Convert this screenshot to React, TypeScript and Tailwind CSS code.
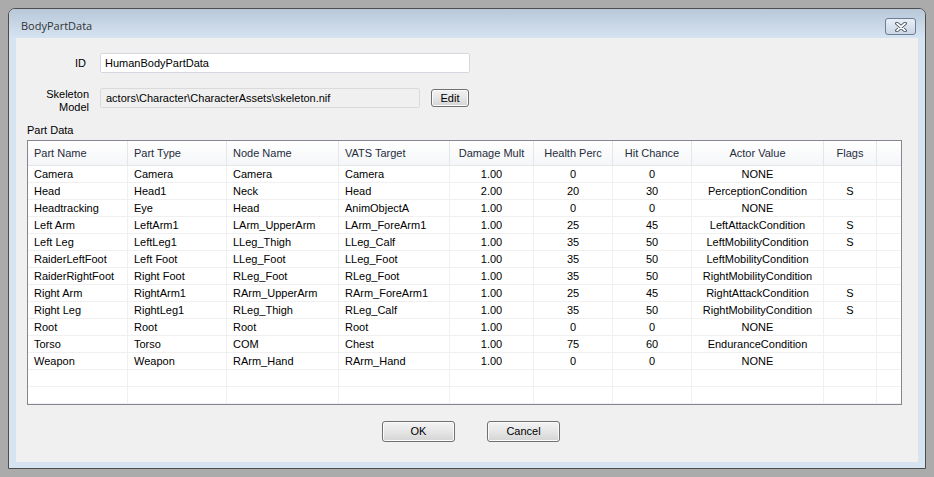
import React from "react";

type Row = {
  name: string;
  type: string;
  node: string;
  vats: string;
  dmg: string;
  health: string;
  hit: string;
  actor: string;
  flags: string;
};

const rows: Row[] = [
  { name: "Camera", type: "Camera", node: "Camera", vats: "Camera", dmg: "1.00", health: "0", hit: "0", actor: "NONE", flags: "" },
  { name: "Head", type: "Head1", node: "Neck", vats: "Head", dmg: "2.00", health: "20", hit: "30", actor: "PerceptionCondition", flags: "S" },
  { name: "Headtracking", type: "Eye", node: "Head", vats: "AnimObjectA", dmg: "1.00", health: "0", hit: "0", actor: "NONE", flags: "" },
  { name: "Left Arm", type: "LeftArm1", node: "LArm_UpperArm", vats: "LArm_ForeArm1", dmg: "1.00", health: "25", hit: "45", actor: "LeftAttackCondition", flags: "S" },
  { name: "Left Leg", type: "LeftLeg1", node: "LLeg_Thigh", vats: "LLeg_Calf", dmg: "1.00", health: "35", hit: "50", actor: "LeftMobilityCondition", flags: "S" },
  { name: "RaiderLeftFoot", type: "Left Foot", node: "LLeg_Foot", vats: "LLeg_Foot", dmg: "1.00", health: "35", hit: "50", actor: "LeftMobilityCondition", flags: "" },
  { name: "RaiderRightFoot", type: "Right Foot", node: "RLeg_Foot", vats: "RLeg_Foot", dmg: "1.00", health: "35", hit: "50", actor: "RightMobilityCondition", flags: "" },
  { name: "Right Arm", type: "RightArm1", node: "RArm_UpperArm", vats: "RArm_ForeArm1", dmg: "1.00", health: "25", hit: "45", actor: "RightAttackCondition", flags: "S" },
  { name: "Right Leg", type: "RightLeg1", node: "RLeg_Thigh", vats: "RLeg_Calf", dmg: "1.00", health: "35", hit: "50", actor: "RightMobilityCondition", flags: "S" },
  { name: "Root", type: "Root", node: "Root", vats: "Root", dmg: "1.00", health: "0", hit: "0", actor: "NONE", flags: "" },
  { name: "Torso", type: "Torso", node: "COM", vats: "Chest", dmg: "1.00", health: "75", hit: "60", actor: "EnduranceCondition", flags: "" },
  { name: "Weapon", type: "Weapon", node: "RArm_Hand", vats: "RArm_Hand", dmg: "1.00", health: "0", hit: "0", actor: "NONE", flags: "" },
];

// column widths and alignment, in the listview's order
const cols = [
  { key: "name", label: "Part Name", w: "w-[100px]", center: false },
  { key: "type", label: "Part Type", w: "w-[99px]", center: false },
  { key: "node", label: "Node Name", w: "w-[112px]", center: false },
  { key: "vats", label: "VATS Target", w: "w-[111px]", center: false },
  { key: "dmg", label: "Damage Mult", w: "w-[84px]", center: true },
  { key: "health", label: "Health Perc", w: "w-[79px]", center: true },
  { key: "hit", label: "Hit Chance", w: "w-[79px]", center: true },
  { key: "actor", label: "Actor Value", w: "w-[132px]", center: true },
  { key: "flags", label: "Flags", w: "w-[53px]", center: true },
] as const;

function WinButton({ label, className }: { label: string; className: string }) {
  return (
    <button
      className={`${className} rounded-[3px] border border-[#707070] bg-gradient-to-b from-[#f3f3f3] via-[#e6e6e6] to-[#d4d4d4] text-[11px] leading-none text-black shadow-[inset_0_0_0_1px_#fbfbfb]`}
    >
      {label}
    </button>
  );
}

function DataRow({ row }: { row?: Row }) {
  return (
    <div className="flex h-[17px] border-b border-[#f0f0f0]">
      {cols.map((c) => (
        <div
          key={c.key}
          className={`${c.w} shrink-0 border-r border-[#f0f0f0] leading-[17px] ${c.center ? "text-center" : "pl-[6px]"} whitespace-nowrap overflow-hidden`}
        >
          {row ? row[c.key] : ""}
        </div>
      ))}
      <div className="flex-1" />
    </div>
  );
}

export default function App() {
  return (
    <div className="w-[934px] h-[477px] bg-[#ababab] pt-2 pl-2 font-['Liberation_Sans',Arial,sans-serif] text-[11px] text-black">
      <div className="w-[918px] h-[461px] rounded-t-[7px] border border-[#4d4d4d] bg-[#d6e3f1] flex flex-col overflow-hidden">
        {/* title bar */}
        <div className="h-[29px] shrink-0 flex items-start justify-between bg-gradient-to-b from-[#b8c8d9] to-[#d6e3f1]">
          <span className="pl-[12px] pt-[9px] font-['Open_Sans',sans-serif] text-[11px] leading-[16px] text-[#333]">
            BodyPartData
          </span>
          <div className="mt-[9px] mr-[9px] w-[31px] h-[17px] rounded-[3px] border border-[#6f7d92] bg-gradient-to-b from-[#e9eff7] to-[#c9d6e6] flex items-center justify-center">
            <svg width="14" height="10" viewBox="0 0 14 10">
              <path d="M3 1.5 L11 8.5 M11 1.5 L3 8.5" stroke="#3d4656" strokeWidth="3.6" strokeLinecap="round" />
              <path d="M3 1.5 L11 8.5 M11 1.5 L3 8.5" stroke="#ffffff" strokeWidth="1.8" strokeLinecap="round" />
            </svg>
          </div>
        </div>

        {/* client area */}
        <div className="mx-[7px] w-[902px] h-[424px] bg-[#f0f0f0] flex flex-col">
          <div className="flex items-center mt-[15px] h-[20px]">
            <div className="w-[84px] pr-[14px] text-right">ID</div>
            <div className="w-[370px] h-[20px] rounded-[2px] border border-[#d5d9df] bg-white pl-[4px] leading-[18px]">
              HumanBodyPartData
            </div>
          </div>

          <div className="flex items-start mt-[15px] h-[25px]">
            <div className="w-[84px] pr-[11px] text-right leading-[13px]">
              Skeleton
              <br />
              Model
            </div>
            <div className="w-[320px] h-[20px] rounded-[2px] border border-[#dadada] bg-[#f0f0f0] pl-[5px] leading-[18px] whitespace-nowrap">
              actors\Character\CharacterAssets\skeleton.nif
            </div>
            <WinButton label="Edit" className="ml-[11px] mt-[1px] w-[38px] h-[18px]" />
          </div>

          <div className="mt-[11px] pl-[11px] leading-[13px]">Part Data</div>

          {/* list view */}
          <div className="ml-[11px] mt-[3px] w-[875px] h-[265px] border border-[#828790] bg-white flex flex-col">
            <div className="flex h-[25px] border-b border-[#e5e5e5] bg-gradient-to-b from-white to-[#f5f6f8] text-[#1f2d3d]">
              {cols.map((c) => (
                <div
                  key={c.key}
                  className={`${c.w} shrink-0 border-r border-[#e3e6ea] leading-[25px] ${c.center ? "text-center" : "pl-[6px]"}`}
                >
                  {c.label}
                </div>
              ))}
              <div className="flex-1" />
            </div>
            {rows.map((r) => (
              <DataRow key={r.name} row={r} />
            ))}
            <DataRow />
            <DataRow />
          </div>

          <div className="flex mt-[16px] pl-[366px] gap-[32px]">
            <WinButton label="OK" className="w-[73px] h-[21px]" />
            <WinButton label="Cancel" className="w-[73px] h-[21px]" />
          </div>
        </div>
      </div>
    </div>
  );
}
